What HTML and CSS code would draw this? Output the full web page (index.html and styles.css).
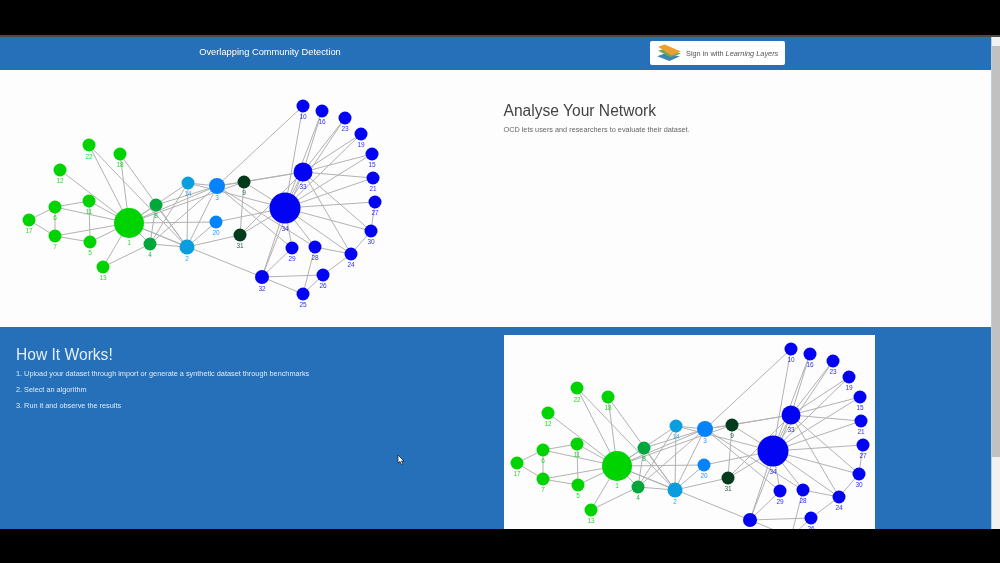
FILE: index.html
```html
<!DOCTYPE html>
<html lang="en">
<head>
    <meta charset="UTF-8">
    <meta name="viewport" content="width=device-width, initial-scale=1.0">
    <title>Overlapping Community Detection</title>
    <link rel="stylesheet" href="styles.css">
</head>
<body>
    <div class="screen">
        <div class="page">
            <nav class="navbar">
                <span class="brand">Overlapping Community Detection</span>
                <a class="signin" href="#">
                    <svg class="layers" viewBox="0 0 26 20">
                        <path d="M0 13 L8 10 L24 13 L13 18 Z" fill="#3d85b5"/>
                        <path d="M1 7 L8 5 L25 10 L14 14 Z" fill="#6ba95a"/>
                        <path d="M1 3 L8 0.500 L25 8 L15 12 Z" fill="#eca02f"/>
                    </svg>
                    <span>Sign in with <em>Learning Layers</em></span>
                </a>
            </nav>

            <section class="row row-white">
                <div class="col">
                    <svg class="graph graph-top" viewBox="0 70 496 257">
                        <defs>
                            <g id="network">
                                <g class="edges">
                                    <line x1="187" y1="247" x2="129" y2="223"/>
                                    <line x1="217" y1="186" x2="129" y2="223"/>
                                    <line x1="217" y1="186" x2="187" y2="247"/>
                                    <line x1="150" y1="244" x2="129" y2="223"/>
                                    <line x1="150" y1="244" x2="187" y2="247"/>
                                    <line x1="150" y1="244" x2="217" y2="186"/>
                                    <line x1="90" y1="242" x2="129" y2="223"/>
                                    <line x1="55" y1="207" x2="129" y2="223"/>
                                    <line x1="55" y1="236" x2="129" y2="223"/>
                                    <line x1="55" y1="236" x2="90" y2="242"/>
                                    <line x1="55" y1="236" x2="55" y2="207"/>
                                    <line x1="156" y1="205" x2="129" y2="223"/>
                                    <line x1="156" y1="205" x2="187" y2="247"/>
                                    <line x1="156" y1="205" x2="217" y2="186"/>
                                    <line x1="156" y1="205" x2="150" y2="244"/>
                                    <line x1="244" y1="182" x2="129" y2="223"/>
                                    <line x1="244" y1="182" x2="217" y2="186"/>
                                    <line x1="303" y1="106" x2="217" y2="186"/>
                                    <line x1="89" y1="201" x2="129" y2="223"/>
                                    <line x1="89" y1="201" x2="90" y2="242"/>
                                    <line x1="89" y1="201" x2="55" y2="207"/>
                                    <line x1="60" y1="170" x2="129" y2="223"/>
                                    <line x1="103" y1="267" x2="129" y2="223"/>
                                    <line x1="103" y1="267" x2="150" y2="244"/>
                                    <line x1="188" y1="183" x2="129" y2="223"/>
                                    <line x1="188" y1="183" x2="187" y2="247"/>
                                    <line x1="188" y1="183" x2="217" y2="186"/>
                                    <line x1="188" y1="183" x2="150" y2="244"/>
                                    <line x1="29" y1="220" x2="55" y2="207"/>
                                    <line x1="29" y1="220" x2="55" y2="236"/>
                                    <line x1="120" y1="154" x2="129" y2="223"/>
                                    <line x1="120" y1="154" x2="187" y2="247"/>
                                    <line x1="216" y1="222" x2="129" y2="223"/>
                                    <line x1="216" y1="222" x2="187" y2="247"/>
                                    <line x1="89" y1="145" x2="129" y2="223"/>
                                    <line x1="89" y1="145" x2="187" y2="247"/>
                                    <line x1="323" y1="275" x2="351" y2="254"/>
                                    <line x1="323" y1="275" x2="303" y2="294"/>
                                    <line x1="315" y1="247" x2="217" y2="186"/>
                                    <line x1="315" y1="247" x2="351" y2="254"/>
                                    <line x1="315" y1="247" x2="303" y2="294"/>
                                    <line x1="292" y1="248" x2="217" y2="186"/>
                                    <line x1="371" y1="231" x2="351" y2="254"/>
                                    <line x1="371" y1="231" x2="375" y2="202"/>
                                    <line x1="240" y1="235" x2="187" y2="247"/>
                                    <line x1="240" y1="235" x2="244" y2="182"/>
                                    <line x1="262" y1="277" x2="129" y2="223"/>
                                    <line x1="262" y1="277" x2="303" y2="294"/>
                                    <line x1="262" y1="277" x2="323" y2="275"/>
                                    <line x1="262" y1="277" x2="292" y2="248"/>
                                    <line x1="303" y1="172" x2="217" y2="186"/>
                                    <line x1="303" y1="172" x2="244" y2="182"/>
                                    <line x1="303" y1="172" x2="372" y2="154"/>
                                    <line x1="303" y1="172" x2="322" y2="111"/>
                                    <line x1="303" y1="172" x2="361" y2="134"/>
                                    <line x1="303" y1="172" x2="373" y2="178"/>
                                    <line x1="303" y1="172" x2="345" y2="118"/>
                                    <line x1="303" y1="172" x2="351" y2="254"/>
                                    <line x1="303" y1="172" x2="371" y2="231"/>
                                    <line x1="303" y1="172" x2="240" y2="235"/>
                                    <line x1="303" y1="172" x2="262" y2="277"/>
                                    <line x1="285" y1="208" x2="244" y2="182"/>
                                    <line x1="285" y1="208" x2="303" y2="106"/>
                                    <line x1="285" y1="208" x2="188" y2="183"/>
                                    <line x1="285" y1="208" x2="372" y2="154"/>
                                    <line x1="285" y1="208" x2="322" y2="111"/>
                                    <line x1="285" y1="208" x2="361" y2="134"/>
                                    <line x1="285" y1="208" x2="216" y2="222"/>
                                    <line x1="285" y1="208" x2="373" y2="178"/>
                                    <line x1="285" y1="208" x2="345" y2="118"/>
                                    <line x1="285" y1="208" x2="351" y2="254"/>
                                    <line x1="285" y1="208" x2="375" y2="202"/>
                                    <line x1="285" y1="208" x2="315" y2="247"/>
                                    <line x1="285" y1="208" x2="292" y2="248"/>
                                    <line x1="285" y1="208" x2="371" y2="231"/>
                                    <line x1="285" y1="208" x2="240" y2="235"/>
                                    <line x1="285" y1="208" x2="262" y2="277"/>
                                    <line x1="285" y1="208" x2="303" y2="172"/>
                                </g>
                                <g class="community c-green">
                                    <circle cx="129" cy="223" r="15"/><text x="129" y="244.5">1</text>
                                    <circle cx="89" cy="145" r="6.5"/><text x="89" y="158.5">22</text>
                                    <circle cx="120" cy="154" r="6.5"/><text x="120" y="167">18</text>
                                    <circle cx="60" cy="170" r="6.5"/><text x="60" y="183">12</text>
                                    <circle cx="89" cy="201" r="6.5"/><text x="89" y="214">11</text>
                                    <circle cx="55" cy="207" r="6.5"/><text x="55" y="220">6</text>
                                    <circle cx="29" cy="220" r="6.5"/><text x="29" y="233">17</text>
                                    <circle cx="55" cy="236" r="6.5"/><text x="55" y="249">7</text>
                                    <circle cx="90" cy="242" r="6.5"/><text x="90" y="255">5</text>
                                    <circle cx="103" cy="267" r="6.5"/><text x="103" y="280">13</text>
                                </g>
                                <g class="community c-teal">
                                    <circle cx="156" cy="205" r="6.5"/><text x="156" y="218">8</text>
                                    <circle cx="150" cy="244" r="6.5"/><text x="150" y="257">4</text>
                                </g>
                                <g class="community c-sky">
                                    <circle cx="187" cy="247" r="7.5"/><text x="187" y="261">2</text>
                                    <circle cx="188" cy="183" r="6.5"/><text x="188" y="196">14</text>
                                </g>
                                <g class="community c-azure">
                                    <circle cx="217" cy="186" r="8"/><text x="217" y="200">3</text>
                                    <circle cx="216" cy="222" r="6.5"/><text x="216" y="235">20</text>
                                </g>
                                <g class="community c-dark">
                                    <circle cx="244" cy="182" r="6.5"/><text x="244" y="195">9</text>
                                    <circle cx="240" cy="235" r="6.5"/><text x="240" y="248">31</text>
                                </g>
                                <g class="community c-blue">
                                    <circle cx="285" cy="208" r="15.5"/><text x="285" y="230.5">34</text>
                                    <circle cx="303" cy="172" r="9.5"/><text x="303" y="188.5">33</text>
                                    <circle cx="303" cy="106" r="6.5"/><text x="303" y="119">10</text>
                                    <circle cx="322" cy="111" r="6.5"/><text x="322" y="124">16</text>
                                    <circle cx="345" cy="118" r="6.5"/><text x="345" y="131">23</text>
                                    <circle cx="361" cy="134" r="6.5"/><text x="361" y="147">19</text>
                                    <circle cx="372" cy="154" r="6.5"/><text x="372" y="167">15</text>
                                    <circle cx="373" cy="178" r="6.5"/><text x="373" y="191">21</text>
                                    <circle cx="375" cy="202" r="6.5"/><text x="375" y="215">27</text>
                                    <circle cx="371" cy="231" r="6.5"/><text x="371" y="244">30</text>
                                    <circle cx="292" cy="248" r="6.5"/><text x="292" y="261">29</text>
                                    <circle cx="315" cy="247" r="6.5"/><text x="315" y="260">28</text>
                                    <circle cx="351" cy="254" r="6.5"/><text x="351" y="267">24</text>
                                    <circle cx="323" cy="275" r="6.5"/><text x="323" y="288">26</text>
                                    <circle cx="262" cy="277" r="7"/><text x="262" y="290.5">32</text>
                                    <circle cx="303" cy="294" r="6.5"/><text x="303" y="307">25</text>
                                </g>
                            </g>
                        </defs>
                        <use href="#network"/>
                    </svg>
                </div>
                <div class="col col-text">
                    <h3>Analyse Your Network</h3>
                    <p>OCD lets users and researchers to evaluate their dataset.</p>
                </div>
            </section>

            <section class="row row-blue">
                <div class="col col-steps">
                    <h3>How It Works!</h3>
                    <p>1. Upload your dataset through import or generate a synthetic dataset through benchmarks</p>
                    <p>2. Select an algorithm</p>
                    <p>3. Run it and observe the results</p>
                </div>
                <div class="col col-shot">
                    <div class="shot">
                        <svg class="graph graph-shot" viewBox="16 92 371 243">
                            <use href="#network"/>
                        </svg>
                    </div>
                </div>
            </section>

            <svg class="cursor" viewBox="0 0 8 12">
                <path d="M1 1 L1 9 L3 7.5 L4.500 10.500 L6 10 L4.500 7 L7 7 Z"/>
            </svg>
        </div>
        <div class="scrollbar">
            <div class="scroll-arrow"></div>
            <div class="scroll-thumb"></div>
        </div>
    </div>
</body>
</html>
```

FILE: styles.css
```css
html, body {
    height: 100%;
}
body {
    margin: 0;
    background: #000000;
    font-family: 'Liberation Sans', Arial, sans-serif;
    overflow: hidden;
}
.screen {
    display: flex;
    height: 492px;
    margin-top: 35px;
    border-top: 2px solid #4a4a4a;
    background: #2570b8;
}
.page {
    position: relative;
    flex: 1;
    display: flex;
    flex-direction: column;
    min-width: 0;
    filter: blur(0.4px);
}
.navbar {
    display: flex;
    align-items: center;
    height: 33px;
    background: #2570b8;
}
.brand {
    width: 540px;
    margin: 0 110px 3px 0;
    text-align: center;
    font-size: 9.300px;
    color: #ffffff;
}
.signin {
    display: flex;
    align-items: center;
    gap: 4px;
    box-sizing: border-box;
    width: 135px;
    height: 24px;
    margin-bottom: 1px;
    padding-left: 7px;
    background: #ffffff;
    border-radius: 2px;
    font-size: 7.350px;
    white-space: nowrap;
    color: #555555;
    text-decoration: none;
}
.layers {
    width: 25px;
    height: 19px;
}
.row {
    display: grid;
    grid-template-columns: 503.500px 1fr;
    overflow: hidden;
}
.row-white {
    height: 257px;
    background: #fdfdfe;
    color: #444444;
}
.row-blue {
    flex: 1;
    background: #2570b8;
    color: #e4eef8;
}
.graph {
    display: block;
}
.graph-top {
    width: 496px;
    height: 257px;
}
.edges line {
    stroke: #b2b2b2;
    stroke-width: 1;
}
.community text {
    font-size: 6.500px;
    text-anchor: middle;
    opacity: 0.85;
}
.c-green { fill: #00d400; }
.c-teal { fill: #00a83c; }
.c-sky { fill: #0a9ede; }
.c-azure { fill: #0682fb; }
.c-dark { fill: #023c1c; }
.c-blue { fill: #0303f4; }
.col-text {
    padding-top: 32px;
}
h3 {
    margin: 0;
    font-weight: 400;
    font-size: 15.600px;
}
p {
    margin: 0;
    font-size: 7.300px;
    line-height: 9px;
}
.col-text p {
    margin-top: 5px;
    color: #666666;
}
.col-steps {
    padding: 19px 0 0 16px;
}
.col-steps p {
    margin-top: 7px;
    color: #dfe9f4;
}
.col-steps h3 + p {
    margin-top: 5px;
}
.col-shot {
    padding-top: 8px;
}
.shot {
    width: 371px;
    height: 243px;
    background: #fdfdfe;
}
.graph-shot {
    width: 371px;
    height: 243px;
}
.cursor {
    position: absolute;
    left: 397px;
    top: 417px;
    width: 8px;
    height: 12px;
    fill: #ffffff;
    stroke: #1a2a3a;
    stroke-width: 0.8;
}
.scrollbar {
    width: 8px;
    border-left: 1px solid #b9cfe6;
    background: #f1f1f1;
}
.scroll-arrow {
    height: 9px;
}
.scroll-thumb {
    height: 411px;
    background: #c1c1c1;
}
```
